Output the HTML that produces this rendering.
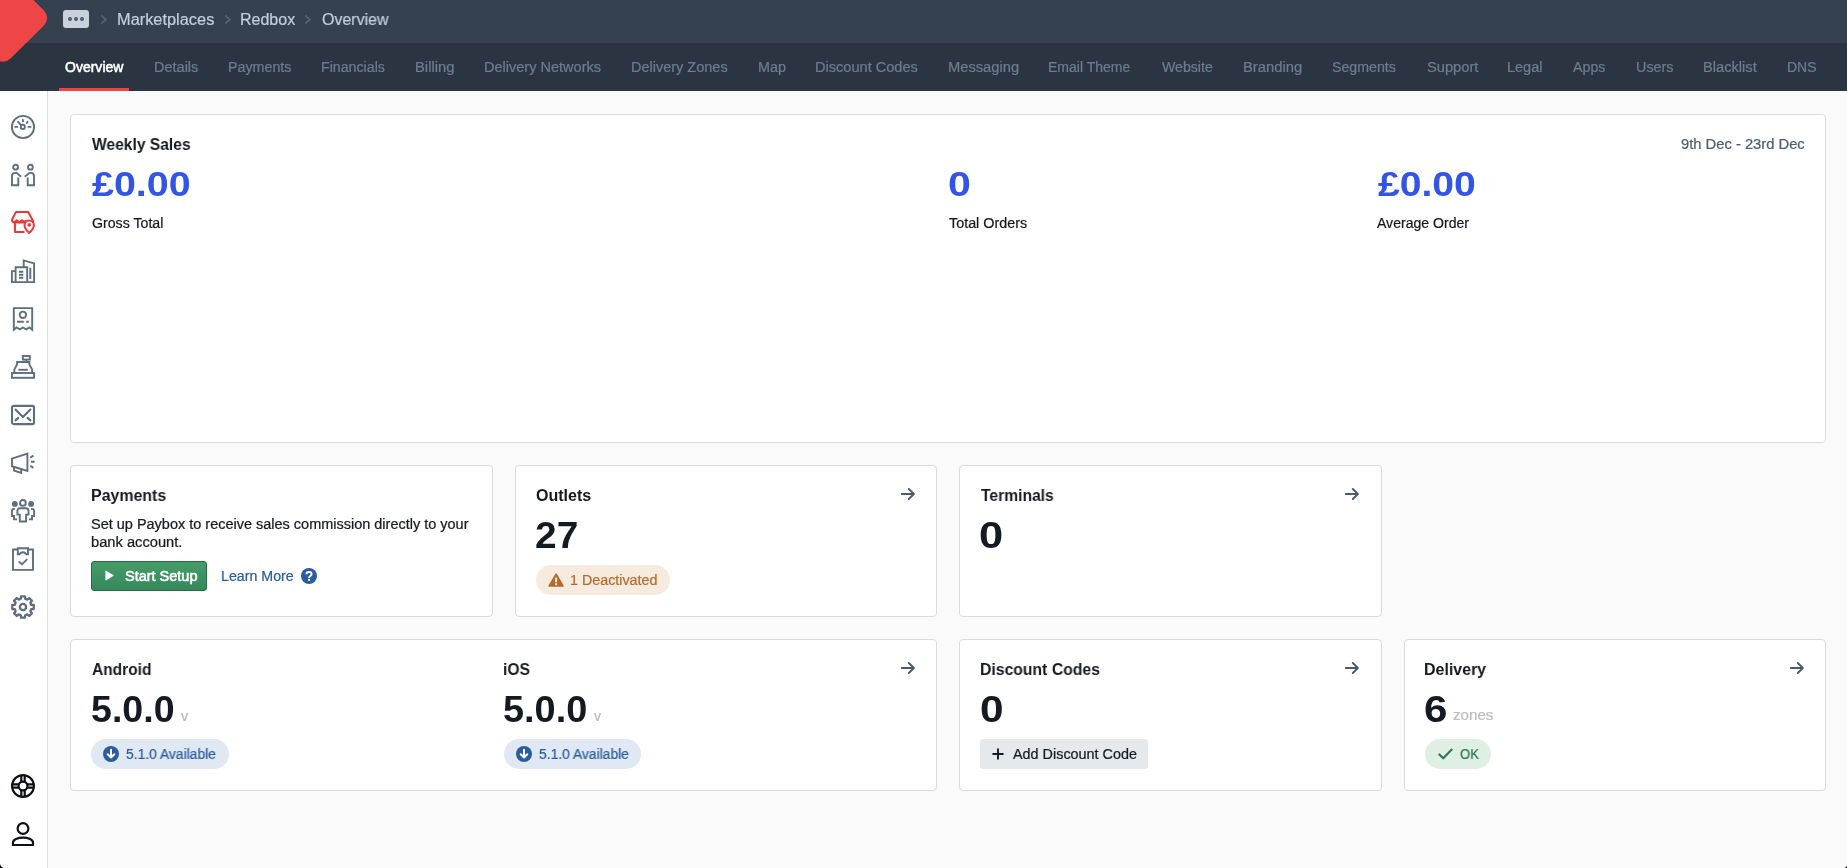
<!DOCTYPE html>
<html lang="en">
<head>
<meta charset="utf-8">
<title>Redbox – Overview</title>
<style>
*{box-sizing:border-box;margin:0;padding:0}
html,body{width:1847px;height:868px;overflow:hidden}
body{font-family:"Liberation Sans",sans-serif;background:#fafafa;position:relative;color:#141a21}
.t{position:absolute;white-space:pre;transform-origin:0 50%;display:block;will-change:transform;-webkit-text-stroke:0.22px}
header{position:absolute;left:0;top:0;width:1847px;height:43px;background:#36414f}
nav{position:absolute;left:0;top:43px;width:1847px;height:48px;background:#2b3541}
.logo{position:absolute;left:-30.8px;top:-15.8px;width:68.2px;height:68.2px;background:#ee4547;border-radius:10.5px;transform:rotate(45deg)}
.more{position:absolute;left:63px;top:10px;width:26px;height:18px;border-radius:3px;background:#c7d2dd}
.more i{position:absolute;top:7px;width:4px;height:4px;border-radius:50%;background:#4d5d70}
.chev{position:absolute;top:14px;width:8px;height:11px}
.active-line{position:absolute;left:59px;top:88px;width:70px;height:3px;background:#ee4447}
aside{position:absolute;left:0;top:91px;width:48px;height:777px;background:#fff;border-right:1px solid #dcdfe0}
aside svg{position:absolute;left:11px;width:24px;height:24px;overflow:visible}
main{position:absolute;left:48px;top:91px;width:1799px;height:777px}
.card{position:absolute;background:#fff;border:1px solid #dadcdc;border-radius:4px}
.abs{position:absolute}
.btn-green{position:absolute;left:20px;top:95px;width:116px;height:30px;border-radius:3px;border:1px solid #256a40;background:linear-gradient(#469c69,#35885a)}
.pill{position:absolute;height:30px;border-radius:15px}
.pill-warn{background:#f7ebe0}
.pill-info{background:#e0e8f4}
.pill-ok{background:#dfefe4}
.btn-grey{position:absolute;height:30px;border-radius:3px;background:#e6e9ec}
.arrow{position:absolute;width:16px;height:14px;overflow:visible}
.ico{position:absolute;overflow:visible}

</style>
</head>
<body>
<header>
  <div class="logo"></div>
  <div class="more"><i style="left:5px"></i><i style="left:11px"></i><i style="left:17px"></i></div>
  <svg class="chev" style="left:100px" viewBox="0 0 8 11"><path d="M1.8 2.1 L6 5.5 L1.8 8.9" fill="none" stroke="#516173" stroke-width="1.9" stroke-linecap="round" stroke-linejoin="round"/></svg>
  <svg class="chev" style="left:224px" viewBox="0 0 8 11"><path d="M1.8 2.1 L6 5.5 L1.8 8.9" fill="none" stroke="#516173" stroke-width="1.9" stroke-linecap="round" stroke-linejoin="round"/></svg>
  <svg class="chev" style="left:304px" viewBox="0 0 8 11"><path d="M1.8 2.1 L6 5.5 L1.8 8.9" fill="none" stroke="#516173" stroke-width="1.9" stroke-linecap="round" stroke-linejoin="round"/></svg>
<span class="t" style="left:116.68px;top:8.96px;font-size:16px;line-height:21px;color:#c3cedb;transform:scaleX(1.0229)">Marketplaces</span>
<span class="t" style="left:239.90px;top:8.96px;font-size:16px;line-height:21px;color:#c3cedb;transform:scaleX(0.9991)">Redbox</span>
<span class="t" style="left:321.60px;top:8.96px;font-size:16px;line-height:21px;color:#c3cedb;transform:scaleX(0.9952)">Overview</span>
</header>
<nav>
<span class="t" style="left:64.60px;top:15.15px;font-size:14px;line-height:18px;color:#ffffff;transform:scaleX(1.0011);-webkit-text-stroke:0.55px">Overview</span>
<span class="t" style="left:153.86px;top:15.15px;font-size:14px;line-height:18px;color:#6d7d90;transform:scaleX(1.0361)">Details</span>
<span class="t" style="left:228.18px;top:15.15px;font-size:14px;line-height:18px;color:#6d7d90;transform:scaleX(1.0188)">Payments</span>
<span class="t" style="left:321.19px;top:15.15px;font-size:14px;line-height:18px;color:#6d7d90;transform:scaleX(1.0141)">Financials</span>
<span class="t" style="left:415.34px;top:15.15px;font-size:14px;line-height:18px;color:#6d7d90;transform:scaleX(1.0572)">Billing</span>
<span class="t" style="left:484.36px;top:15.15px;font-size:14px;line-height:18px;color:#6d7d90;transform:scaleX(1.0376)">Delivery Networks</span>
<span class="t" style="left:630.96px;top:15.15px;font-size:14px;line-height:18px;color:#6d7d90;transform:scaleX(1.0350)">Delivery Zones</span>
<span class="t" style="left:757.57px;top:15.15px;font-size:14px;line-height:18px;color:#6d7d90;transform:scaleX(1.0284)">Map</span>
<span class="t" style="left:815.46px;top:15.15px;font-size:14px;line-height:18px;color:#6d7d90;transform:scaleX(1.0406)">Discount Codes</span>
<span class="t" style="left:947.95px;top:15.15px;font-size:14px;line-height:18px;color:#6d7d90;transform:scaleX(1.0498)">Messaging</span>
<span class="t" style="left:1048.20px;top:15.15px;font-size:14px;line-height:18px;color:#6d7d90;transform:scaleX(0.9990)">Email Theme</span>
<span class="t" style="left:1161.90px;top:15.15px;font-size:14px;line-height:18px;color:#6d7d90;transform:scaleX(1.0092)">Website</span>
<span class="t" style="left:1242.64px;top:15.15px;font-size:14px;line-height:18px;color:#6d7d90;transform:scaleX(1.0561)">Branding</span>
<span class="t" style="left:1331.80px;top:15.15px;font-size:14px;line-height:18px;color:#6d7d90;transform:scaleX(1.0137)">Segments</span>
<span class="t" style="left:1426.50px;top:15.15px;font-size:14px;line-height:18px;color:#6d7d90;transform:scaleX(1.0479)">Support</span>
<span class="t" style="left:1507.27px;top:15.15px;font-size:14px;line-height:18px;color:#6d7d90;transform:scaleX(1.0349)">Legal</span>
<span class="t" style="left:1573.20px;top:15.15px;font-size:14px;line-height:18px;color:#6d7d90;transform:scaleX(1.0185)">Apps</span>
<span class="t" style="left:1635.87px;top:15.15px;font-size:14px;line-height:18px;color:#6d7d90;transform:scaleX(1.0265)">Users</span>
<span class="t" style="left:1703.15px;top:15.15px;font-size:14px;line-height:18px;color:#6d7d90;transform:scaleX(1.0465)">Blacklist</span>
<span class="t" style="left:1787.20px;top:15.15px;font-size:14px;line-height:18px;color:#6d7d90;transform:scaleX(0.9957)">DNS</span>
</nav>
<div class="active-line"></div>
<div class="logo" style="z-index:5"></div>
<aside>
<!--ICONS-START-->
<!-- dashboard -->
<svg style="top:24px" viewBox="0 0 24 24" fill="none" stroke="#5d6e7f" stroke-width="1.9" stroke-linecap="round" stroke-linejoin="round"><circle cx="12" cy="12" r="11.1"/><circle cx="11.8" cy="11.9" r="2.1"/><path d="M10.4 10.3 L7 6.8 M11.9 5 V6.4 M16.6 6.8 L15.7 7.9 M4.3 11.9 H6.3 M17.5 11.9 H19.6"/></svg>
<!-- customers -->
<svg style="top:72px" viewBox="0 0 24 24" fill="none" stroke="#5d6e7f" stroke-width="1.9" stroke-linejoin="miter"><circle cx="4.6" cy="4.2" r="2.4"/><circle cx="19.4" cy="4.2" r="2.4"/><path d="M10.2 13.8 L5.6 9.9 H4.4 C2.4 9.9 1 11.3 1 13.3 V22.3 H7.3 V14.6"/><path d="M13.8 13.8 L18.4 9.9 H19.6 C21.6 9.9 23 11.3 23 13.3 V22.3 H16.7 V14.6"/></svg>
<!-- marketplace (active) -->
<svg style="top:120px" viewBox="0 0 24 24" fill="none" stroke="#ea3836" stroke-width="2" stroke-linejoin="round" stroke-linecap="round"><path d="M12.7 21 H3.95 V12"/><path d="M22.4 10.4 L17.2 0.9 H5 L1 8.7 C1 10.4 2 11.3 3.3 11.3 L5.8 9.2 L8.3 11.3 L11 9.2 L13.4 11.2 L14.8 9.8"/><path d="M3 11.4 H13.2"/><path d="M18.2 21.9 C18.2 21.9 13.5 17.7 13.5 14.2 A4.7 4.7 0 0 1 22.9 14.2 C22.9 17.7 18.2 21.9 18.2 21.9 Z"/><circle cx="18.2" cy="13.9" r="1.8" fill="#ea3836" stroke="none"/></svg>
<!-- chains/buildings -->
<svg style="top:168px" viewBox="0 0 24 24" fill="none" stroke="#5d6e7f" stroke-width="1.9" stroke-linejoin="miter"><path d="M12.7 8 V1.4 L23.1 4.4 V23.1 H0.9 V12.1 H4.6"/><path d="M4.6 23 V8.2 H16.2 V23"/><path d="M8 12.7 H12.3 M8 15.8 H12.3 M8 18.8 H12.3 M19.3 8.7 V20"/></svg>
<!-- orders/receipt -->
<svg style="top:216px" viewBox="0 0 24 24" fill="none" stroke="#5d6e7f" stroke-width="1.9" stroke-linejoin="miter"><path d="M2.8 22.8 V1.1 H21.2 V22.8 L18.4 20.5 L15.2 22.3 L12 20.5 L8.8 22.3 L5.6 20.5 Z"/><circle cx="11.9" cy="7.8" r="3.2"/><path d="M6 14.8 H12.8 M15.2 14.8 H17.8"/></svg>
<!-- terminals/register -->
<svg style="top:264px" viewBox="0 0 24 24" fill="none" stroke="#5d6e7f" stroke-width="1.9" stroke-linejoin="miter"><rect x="11.8" y="1" width="7" height="3.6"/><path d="M15.2 4.6 V7"/><path d="M3.3 18 V15.2 C3.3 12.6 6.1 11.2 6.1 8.4 V7 H18.3 V8.4 C18.3 11.2 21.1 12.6 21.1 15.2 V18"/><rect x="1" y="18" width="22" height="4.8"/><path d="M7.4 14.8 H16.8"/></svg>
<!-- mail -->
<svg style="top:312px" viewBox="0 0 24 24" fill="none" stroke="#5d6e7f" stroke-width="2.1" stroke-linejoin="round" stroke-linecap="round"><rect x="1" y="2.9" width="22" height="18.2" rx="1.6"/><path d="M4.5 6.5 L11.9 14 L19.4 6.5 M4.5 17.4 L7.3 14.9 M19.4 17.4 L16.6 14.9"/></svg>
<!-- campaigns/megaphone -->
<svg style="top:360px" viewBox="0 0 24 24" fill="none" stroke="#5d6e7f" stroke-width="1.9" stroke-linejoin="miter"><path d="M16.4 2.5 V20 L1 15.2 V7.6 Z"/><path d="M3 15.9 V19.6 L10.2 21.9 V18.2"/><path d="M19.3 6.6 L22.4 4.6 M20 10.8 H23.6 M19.3 14.8 L22.4 16.9" stroke-linecap="butt"/></svg>
<!-- teammates -->
<svg style="top:408px" viewBox="0 0 24 24" fill="none" stroke="#5d6e7f" stroke-width="1.9" stroke-linejoin="miter"><circle cx="11.9" cy="3.9" r="2.9"/><circle cx="3.8" cy="4.9" r="2.9" fill="#5d6e7f" stroke="none"/><circle cx="20.1" cy="4.9" r="2.9" fill="#5d6e7f" stroke="none"/><path d="M9 9.2 C7.4 9.2 6.4 10.3 6.4 11.8 V15.6 H8.8 V22.5 H15.1 V15.6 H17.5 V11.8 C17.5 10.3 16.5 9.2 14.9 9.2 Z"/><path d="M4 9.9 H3 C1.7 9.9 0.9 10.8 0.9 12 V17 H3 V20.4 H6"/><path d="M20 9.9 H21 C22.3 9.9 23.1 10.8 23.1 12 V17 H21 V20.4 H18"/></svg>
<!-- tasks/clipboard -->
<svg style="top:456px" viewBox="0 0 24 24" fill="none" stroke="#5d6e7f" stroke-width="1.9" stroke-linejoin="miter"><path d="M6.8 2.5 H2 V22.9 H22 V2.5 H17"/><path d="M6.8 1.2 H17 V7.3 H15.3 C14.5 6 13.4 5.3 11.9 5.3 C10.4 5.3 9.3 6 8.5 7.3 H6.8 Z"/><path d="M8.3 15 L10.9 17.4 L15.8 12.6" stroke-width="1.9" stroke-linecap="round" stroke-linejoin="round"/></svg>
<!-- settings -->
<svg style="top:504px" viewBox="0 0 24 24" fill="none" stroke="#5d6e7f" stroke-width="2.3" stroke-linejoin="round"><circle cx="12" cy="12" r="3.1"/><path d="M9.80 3.79 L10.01 1.28 L13.99 1.28 L14.20 3.79 L16.25 4.64 L18.17 3.02 L20.98 5.83 L19.36 7.75 L20.21 9.80 L22.72 10.01 L22.72 13.99 L20.21 14.20 L19.36 16.25 L20.98 18.17 L18.17 20.98 L16.25 19.36 L14.20 20.21 L13.99 22.72 L10.01 22.72 L9.80 20.21 L7.75 19.36 L5.83 20.98 L3.02 18.17 L4.64 16.25 L3.79 14.20 L1.28 13.99 L1.28 10.01 L3.79 9.80 L4.64 7.75 L3.02 5.83 L5.83 3.02 L7.75 4.64 Z"/></svg>
<!-- help -->
<svg style="top:683px" viewBox="0 0 24 24" fill="none" stroke="#0d1116" stroke-width="2.2"><circle cx="12" cy="12" r="10.9"/><circle cx="12" cy="12" r="4.4"/><path d="M10.3 1.5 V7.8 M13.7 1.5 V7.8 M10.3 16.2 V22.5 M13.7 16.2 V22.5 M1.5 10.3 H7.8 M1.5 13.7 H7.8 M16.2 10.3 H22.5 M16.2 13.7 H22.5"/></svg>
<!-- account -->
<svg style="top:731px" viewBox="0 0 24 24" fill="none" stroke="#0d1116" stroke-width="2.2" stroke-linejoin="miter"><circle cx="12" cy="6.5" r="5.4"/><path d="M2 23 V20.4 C2 17.6 6.5 15.6 12 15.6 C17.5 15.6 22 17.6 22 20.4 V23 Z"/></svg>
<!--ICONS-END-->
</aside>
<main>
<section class="card" style="left:22px;top:23px;width:1756px;height:329px">
<span class="t" style="left:20.90px;top:18.76px;font-size:16px;line-height:21px;color:#141a21;transform:scaleX(0.9752);font-weight:700;-webkit-text-stroke:0">Weekly Sales</span>
<span class="t" style="left:1609.60px;top:20.15px;font-size:14px;line-height:18px;color:#4d5e70;transform:scaleX(1.0528)">9th Dec - 23rd Dec</span>
<span class="t" style="left:21.20px;top:46.37px;font-size:35px;line-height:46px;color:#3355e6;transform:scaleX(1.1249);font-weight:700;-webkit-text-stroke:0">£0.00</span>
<span class="t" style="left:876.73px;top:46.37px;font-size:35px;line-height:46px;color:#3355e6;transform:scaleX(1.1722);font-weight:700;-webkit-text-stroke:0">0</span>
<span class="t" style="left:1306.90px;top:46.37px;font-size:35px;line-height:46px;color:#3355e6;transform:scaleX(1.1168);font-weight:700;-webkit-text-stroke:0">£0.00</span>
<span class="t" style="left:20.70px;top:98.75px;font-size:14px;line-height:18px;color:#141a21;transform:scaleX(1.0115)">Gross Total</span>
<span class="t" style="left:877.90px;top:98.75px;font-size:14px;line-height:18px;color:#141a21;transform:scaleX(1.0243)">Total Orders</span>
<span class="t" style="left:1306.00px;top:98.75px;font-size:14px;line-height:18px;color:#141a21;transform:scaleX(1.0043)">Average Order</span>
</section>
<section class="card" style="left:22px;top:374px;width:422.5px;height:152px">
<div class="btn-green"></div>
<svg class="ico" style="left:33.5px;top:104.1px;width:9px;height:11px" viewBox="0 0 9 11"><path d="M0.8 0.9 L8.3 5.5 L0.8 10.1 Z" fill="#fff" stroke="#fff" stroke-width="0.8" stroke-linejoin="round"/></svg>
<svg class="ico" style="left:230px;top:102px;width:16px;height:16px" viewBox="0 0 16 16"><circle cx="8" cy="8" r="8" fill="#2a5c9e"/><path d="M5.5 6.2 C5.5 4.7 6.6 3.9 8.05 3.9 C9.6 3.9 10.6 4.8 10.6 6 C10.6 7 9.9 7.5 9.2 8 C8.6 8.4 8.1 8.8 8.1 9.9" fill="none" stroke="#fff" stroke-width="2" stroke-linecap="butt"/><rect x="7.1" y="10.9" width="2" height="2" fill="#fff"/></svg>
<span class="t" style="left:19.61px;top:19.06px;font-size:16px;line-height:21px;color:#141a21;transform:scaleX(0.9947);font-weight:700;-webkit-text-stroke:0">Payments</span>
<span class="t" style="left:19.70px;top:49.15px;font-size:14px;line-height:18px;color:#141a21;transform:scaleX(1.0343)">Set up Paybox to receive sales commission directly to your</span>
<span class="t" style="left:19.80px;top:66.85px;font-size:14px;line-height:18px;color:#141a21;transform:scaleX(1.0489)">bank account.</span>
<span class="t" style="left:53.70px;top:101.05px;font-size:14px;line-height:18px;color:#ffffff;transform:scaleX(1.0348);-webkit-text-stroke:0.55px">Start Setup</span>
<span class="t" style="left:150.48px;top:101.05px;font-size:14px;line-height:18px;color:#2a5c9e;transform:scaleX(1.0154)">Learn More</span>
</section>
<section class="card" style="left:466.5px;top:374px;width:422.5px;height:152px">
<svg class="arrow" style="left:384.6px;top:21.4px" viewBox="0 0 16 14"><path d="M1.8 7 H13.7 M8.8 2 L13.9 7 L8.8 12" fill="none" stroke="#4a5a6b" stroke-width="1.9" stroke-linecap="round" stroke-linejoin="round"/></svg>
<div class="pill pill-warn" style="left:20.5px;top:99px;width:134px"></div>
<svg class="ico" style="left:32.6px;top:106.6px;width:16.2px;height:14.3px" viewBox="0 0 17 15"><path d="M8.5 1.2 L15.8 13.6 H1.2 Z" fill="#b36b2c" stroke="#b36b2c" stroke-width="1.6" stroke-linejoin="round"/><rect x="7.4" y="4.9" width="2.2" height="4.8" fill="#f7ebe0"/><rect x="7.4" y="10.8" width="2.2" height="2" fill="#f7ebe0"/></svg>
<span class="t" style="left:20.10px;top:19.06px;font-size:16px;line-height:21px;color:#141a21;transform:scaleX(1.0015);font-weight:700;-webkit-text-stroke:0">Outlets</span>
<span class="t" style="left:19.02px;top:46.43px;font-size:36px;line-height:47px;color:#141a21;transform:scaleX(1.0810);font-weight:700;-webkit-text-stroke:0">27</span>
<span class="t" style="left:54.48px;top:105.15px;font-size:14px;line-height:18px;color:#b36b2c;transform:scaleX(1.0212)">1 Deactivated</span>
</section>
<section class="card" style="left:911px;top:374px;width:422.5px;height:152px">
<svg class="arrow" style="left:384.1px;top:21.4px" viewBox="0 0 16 14"><path d="M1.8 7 H13.7 M8.8 2 L13.9 7 L8.8 12" fill="none" stroke="#4a5a6b" stroke-width="1.9" stroke-linecap="round" stroke-linejoin="round"/></svg>
<span class="t" style="left:20.60px;top:19.06px;font-size:16px;line-height:21px;color:#141a21;transform:scaleX(0.9772);font-weight:700;-webkit-text-stroke:0">Terminals</span>
<span class="t" style="left:19.39px;top:46.43px;font-size:36px;line-height:47px;color:#141a21;transform:scaleX(1.2056);font-weight:700;-webkit-text-stroke:0">0</span>
</section>
<section class="card" style="left:22px;top:548px;width:867px;height:152px">
<svg class="arrow" style="left:829.1px;top:21.4px" viewBox="0 0 16 14"><path d="M1.8 7 H13.7 M8.8 2 L13.9 7 L8.8 12" fill="none" stroke="#4a5a6b" stroke-width="1.9" stroke-linecap="round" stroke-linejoin="round"/></svg>
<div class="pill pill-info" style="left:20px;top:99px;width:138px"></div>
<svg class="ico" style="left:32px;top:106px;width:16px;height:16px" viewBox="0 0 16 16"><circle cx="8" cy="8" r="8" fill="#2a5c9e"/><path d="M8 3.8 V11.4 M4.7 8.3 L8 11.6 L11.3 8.3" fill="none" stroke="#fff" stroke-width="2" stroke-linecap="round" stroke-linejoin="round"/></svg>
<div class="pill pill-info" style="left:433px;top:99px;width:137px"></div>
<svg class="ico" style="left:444.5px;top:106px;width:16px;height:16px" viewBox="0 0 16 16"><circle cx="8" cy="8" r="8" fill="#2a5c9e"/><path d="M8 3.8 V11.4 M4.7 8.3 L8 11.6 L11.3 8.3" fill="none" stroke="#fff" stroke-width="2" stroke-linecap="round" stroke-linejoin="round"/></svg>
<span class="t" style="left:20.60px;top:19.26px;font-size:16px;line-height:21px;color:#141a21;transform:scaleX(0.9711);font-weight:700;-webkit-text-stroke:0">Android</span>
<span class="t" style="left:20.36px;top:46.23px;font-size:36px;line-height:47px;color:#141a21;transform:scaleX(1.0430);font-weight:700;-webkit-text-stroke:0">5.0.0</span>
<span class="t" style="left:110.30px;top:66.95px;font-size:14px;line-height:18px;color:#b8b8b8;transform:scaleX(1.0286)">v</span>
<span class="t" style="left:55.00px;top:105.45px;font-size:14px;line-height:18px;color:#2a5c9e;transform:scaleX(0.9902)">5.1.0 Available</span>
<span class="t" style="left:431.73px;top:19.26px;font-size:16px;line-height:21px;color:#141a21;transform:scaleX(0.9743);font-weight:700;-webkit-text-stroke:0">iOS</span>
<span class="t" style="left:432.35px;top:46.23px;font-size:36px;line-height:47px;color:#141a21;transform:scaleX(1.0532);font-weight:700;-webkit-text-stroke:0">5.0.0</span>
<span class="t" style="left:522.90px;top:66.95px;font-size:14px;line-height:18px;color:#b8b8b8;transform:scaleX(1.0143)">v</span>
<span class="t" style="left:467.60px;top:105.45px;font-size:14px;line-height:18px;color:#2a5c9e;transform:scaleX(0.9902)">5.1.0 Available</span>
</section>
<section class="card" style="left:911px;top:548px;width:422.5px;height:152px">
<svg class="arrow" style="left:384.1px;top:21.4px" viewBox="0 0 16 14"><path d="M1.8 7 H13.7 M8.8 2 L13.9 7 L8.8 12" fill="none" stroke="#4a5a6b" stroke-width="1.9" stroke-linecap="round" stroke-linejoin="round"/></svg>
<div class="btn-grey" style="left:20px;top:99px;width:168px"></div>
<svg class="ico" style="left:32px;top:108px;width:12px;height:12px" viewBox="0 0 12 12"><path d="M6 1.2 V10.8 M1.2 6 H10.8" fill="none" stroke="#141a21" stroke-width="1.9" stroke-linecap="round"/></svg>
<span class="t" style="left:20.22px;top:19.26px;font-size:16px;line-height:21px;color:#141a21;transform:scaleX(0.9844);font-weight:700;-webkit-text-stroke:0">Discount Codes</span>
<span class="t" style="left:20.02px;top:46.23px;font-size:36px;line-height:47px;color:#141a21;transform:scaleX(1.1778);font-weight:700;-webkit-text-stroke:0">0</span>
<span class="t" style="left:53.10px;top:105.45px;font-size:14px;line-height:18px;color:#141a21;transform:scaleX(1.0278)">Add Discount Code</span>
</section>
<section class="card" style="left:1355.5px;top:548px;width:422.5px;height:152px">
<svg class="arrow" style="left:384.6px;top:21.4px" viewBox="0 0 16 14"><path d="M1.8 7 H13.7 M8.8 2 L13.9 7 L8.8 12" fill="none" stroke="#4a5a6b" stroke-width="1.9" stroke-linecap="round" stroke-linejoin="round"/></svg>
<div class="pill pill-ok" style="left:20.5px;top:99px;width:66px"></div>
<svg class="ico" style="left:33px;top:108px;width:15px;height:12px" viewBox="0 0 15 12"><path d="M1.3 6.4 L5.3 10.3 L13.7 1.6" fill="none" stroke="#2a7a4c" stroke-width="2.1" stroke-linecap="round" stroke-linejoin="round"/></svg>
<span class="t" style="left:19.40px;top:19.26px;font-size:16px;line-height:21px;color:#141a21;transform:scaleX(0.9973);font-weight:700;-webkit-text-stroke:0">Delivery</span>
<span class="t" style="left:19.23px;top:46.23px;font-size:36px;line-height:47px;color:#141a21;transform:scaleX(1.1722);font-weight:700;-webkit-text-stroke:0">6</span>
<span class="t" style="left:48.40px;top:65.00px;font-size:15px;line-height:20px;color:#bcbcbc;transform:scaleX(1.0094)">zones</span>
<span class="t" style="left:55.20px;top:105.45px;font-size:14px;line-height:18px;color:#2a7a4c;transform:scaleX(0.9335)">OK</span>
</section>
</main>
<svg class="corner-br" style="position:absolute;left:1843px;top:864px;width:4px;height:4px;z-index:9" viewBox="0 0 4 4"><path d="M4 1.6 C3.7 2.9 2.9 3.7 1.6 4 L4 4 Z" fill="#0a0a0a"/></svg>
<svg class="corner-bl" style="position:absolute;left:0;top:862px;width:6px;height:6px;z-index:9" viewBox="0 0 6 6"><path d="M0 1.8 C0.3 4 1.8 5.6 4 6 L0 6 Z" fill="#0a0a0a"/></svg>
</body>
</html>
